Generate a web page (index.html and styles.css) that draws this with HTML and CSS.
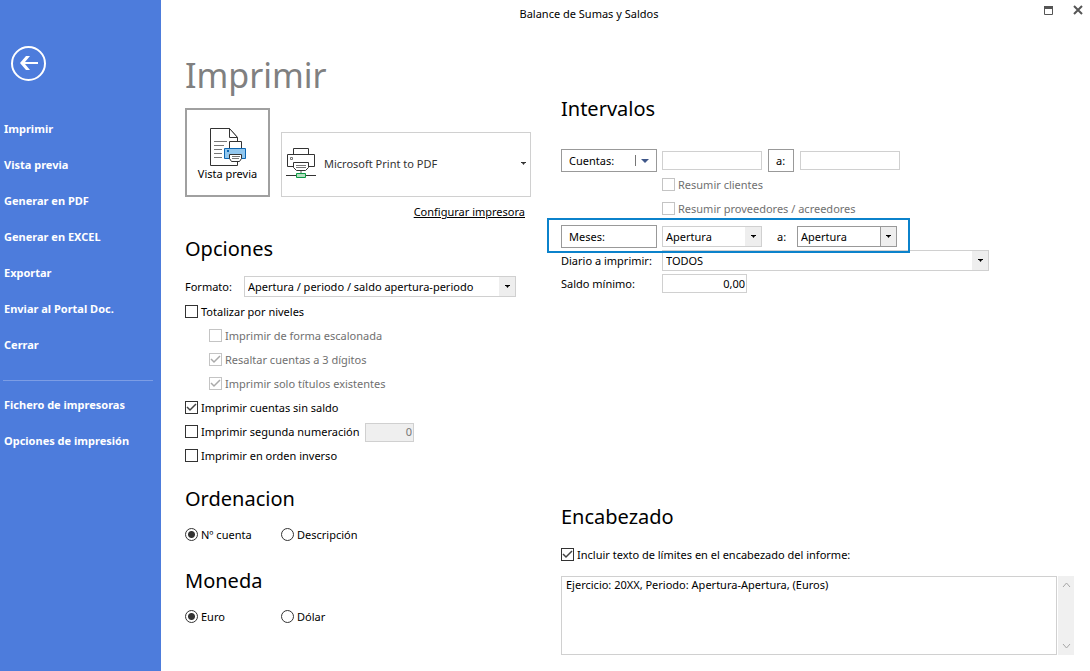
FILE: index.html
```html
<!DOCTYPE html>
<html lang="es">
<head>
<meta charset="utf-8">
<title>Balance de Sumas y Saldos</title>
<link rel="stylesheet" href="styles.css">
</head>
<body>
<aside class="sidebar">
  <button class="back" type="button" aria-label="Volver">
    <svg width="35" height="35" viewBox="0 0 35 35" fill="none" stroke="#fff"><circle cx="17.500" cy="17.500" r="16.500" stroke-width="2"/><path d="M27 17H11" stroke-width="2"/><path d="M9 17l6-7h4l-5 6v2l5 6h-4z" fill="#fff" stroke="none"/></svg>
  </button>
  <nav class="nav">
    <a href="#">Imprimir</a>
    <a href="#">Vista previa</a>
    <a href="#">Generar en PDF</a>
    <a href="#">Generar en EXCEL</a>
    <a href="#">Exportar</a>
    <a href="#">Enviar al Portal Doc.</a>
    <a href="#">Cerrar</a>
  </nav>
  <hr class="divider">
  <nav class="nav">
    <a href="#">Fichero de impresoras</a>
    <a href="#">Opciones de impresión</a>
  </nav>
</aside>

<div class="window">
  <header class="titlebar">
    <span class="caption">Balance de Sumas y Saldos</span>
    <div class="controls">
      <button type="button" aria-label="Maximizar"><svg width="9" height="9" viewBox="0 0 9 9"><path d="M.5 1.500h8v7h-8z" fill="none" stroke="#555"/><path d="M0 0h9v3H0z" fill="#555"/></svg></button>
      <button type="button" aria-label="Cerrar ventana"><svg width="10" height="10" viewBox="0 0 10 10"><path d="M1 1l8 8M9 1L1 9" stroke="#555" stroke-width="2"/></svg></button>
    </div>
  </header>

  <main class="content">
    <div class="left">
      <h1>Imprimir</h1>
      <div class="print">
        <button class="preview" type="button">
          <svg width="36" height="39" viewBox="1 0 36 39" fill="#fff" stroke="#333"><path d="M1.500.5h19l8 9v28h-27z"/><path d="M20.500.5v9h8z"/><path d="M5 13.500h13M5 17.500h10M5 21.500h8M5 25.500h8M5 29.500h8" stroke="#777"/><path d="M20.500 13.500h12v7h-12z"/><path d="M15.500 20.500h21v10h-21z" fill="#92c7ee" stroke="#0c66b2"/><path d="M18 22h2v2h-2z" fill="#0c66b2" stroke="none"/><path d="M20.500 26.500h12v4l-2 3h-8l-2-3z"/><path d="M23 28.500h8M23 30.500h7" stroke="#777"/></svg>
          <span>Vista previa</span>
        </button>
        <button class="printer" type="button">
          <svg width="30" height="31" viewBox="0 0 30 31" fill="#fff" stroke="#333"><path d="M7.500.5h15v6h-15z"/><path d="M1.500 6.500h27v12h-27z"/><path d="M4.500 9.500h2v2h-2z" stroke="#777"/><path d="M7.500 14.500h15v5l-3 3h-9l-3-3z"/><path d="M10 17.500h10M10 19.500h10" stroke="#777"/><path d="M15 23v3" stroke="#aaa" stroke-width="2"/><path d="M0 27.500h30"/><path d="M10.500 25.500h9v4h-9z" fill="#b5dfc0" stroke="#0c9a44"/></svg>
          <span class="printer-name">Microsoft Print to PDF</span>
          <svg width="5" height="3" viewBox="0 0 5 3"><path d="M0 0h5v1H4L2.500 3 1 1H0z" fill="#333"/></svg>
        </button>
      </div>
      <a class="configure" href="#">Configurar impresora</a>

      <section>
        <h2>Opciones</h2>
        <div class="format">
          <label for="formato">Formato:</label>
          <select id="formato" class="combo"><option>Apertura / periodo / saldo apertura-periodo</option></select>
        </div>
        <label class="check"><input type="checkbox">Totalizar por niveles</label>
        <label class="check nested"><input type="checkbox" disabled>Imprimir de forma escalonada</label>
        <label class="check nested"><input type="checkbox" checked disabled>Resaltar cuentas a 3 dígitos</label>
        <label class="check nested"><input type="checkbox" checked disabled>Imprimir solo títulos existentes</label>
        <label class="check"><input type="checkbox" checked>Imprimir cuentas sin saldo</label>
        <div class="numbering">
          <label class="check"><input type="checkbox">Imprimir segunda numeración</label>
          <input class="field number" type="text" value="0" aria-label="Segunda numeración" disabled>
        </div>
        <label class="check"><input type="checkbox">Imprimir en orden inverso</label>
      </section>

      <section class="choice">
        <h2>Ordenacion</h2>
        <div class="radios">
          <label class="check"><input type="radio" name="orden" checked>Nº cuenta</label>
          <label class="check"><input type="radio" name="orden">Descripción</label>
        </div>
      </section>

      <section class="choice">
        <h2>Moneda</h2>
        <div class="radios">
          <label class="check"><input type="radio" name="moneda" checked>Euro</label>
          <label class="check"><input type="radio" name="moneda">Dólar</label>
        </div>
      </section>
    </div>

    <div class="right">
      <section>
        <h2>Intervalos</h2>
        <div class="ranges">
          <button class="box split" type="button"><span>Cuentas:</span><svg width="15" height="11" viewBox="0 0 15 11"><path d="M.5 0v11" stroke="#777"/><path d="M6 4h8l-4 4z" fill="#3f5789"/></svg></button>
          <div class="pair">
            <input class="field" type="text" aria-label="Cuenta desde">
            <button class="box until" type="button">a:</button>
            <input class="field" type="text" aria-label="Cuenta hasta">
          </div>
          <div class="summary">
            <label class="check"><input type="checkbox" disabled>Resumir clientes</label>
            <label class="check"><input type="checkbox" disabled>Resumir proveedores / acreedores</label>
          </div>
          <div class="months">
            <button class="box" type="button">Meses:</button>
            <select class="combo" aria-label="Mes desde"><option>Apertura</option></select>
            <label class="month-to" for="mes-hasta">a:</label>
            <select id="mes-hasta" class="combo active"><option>Apertura</option></select>
          </div>
          <label for="diario">Diario a imprimir:</label>
          <select id="diario" class="combo journal"><option>TODOS</option></select>
          <label class="minimum-label" for="saldo">Saldo mínimo:</label>
          <input id="saldo" class="field number minimum" type="text" value="0,00">
        </div>
      </section>

      <section class="heading">
        <h2>Encabezado</h2>
        <label class="check"><input type="checkbox" checked>Incluir texto de límites en el encabezado del informe:</label>
        <div class="note">
          <textarea aria-label="Texto del encabezado">Ejercicio: 20XX, Periodo: Apertura-Apertura, (Euros)</textarea>
          <div class="scroll">
            <svg width="9" height="6" viewBox="0 0 9 6" fill="none" stroke="#a6a6a6"><path d="M1 5l3.500-4L8 5"/></svg>
            <svg width="9" height="6" viewBox="0 0 9 6" fill="none" stroke="#a6a6a6"><path d="M1 1l3.500 4L8 1"/></svg>
          </div>
        </div>
      </section>
    </div>
  </main>
</div>
</body>
</html>
```
FILE: styles.css
```css
* { box-sizing: border-box; }

body {
  margin: 0;
  min-height: 100vh;
  display: flex;
  background: #fff;
  color: #000;
  font: 11px/16px "Noto Sans", "Open Sans", sans-serif;
}

button, input, select, textarea { font: inherit; color: inherit; margin: 0; border-radius: 0; }
button { background: #fff; padding: 0; border: 0; }
svg { display: block; flex: none; }

.sidebar { width: 161px; flex: none; background: #4d7cdc; padding-top: 46px; }
.back { display: block; background: none; margin: 0 0 30px 11px; }
.nav { display: flex; flex-direction: column; }
.nav a { height: 36px; padding-left: 4px; line-height: 36px; color: #fff; font-weight: 700; text-decoration: none; }
.divider { border: 0; height: 1px; background: #7c9de5; margin: 17px 8px 6px 3px; }

.window { flex: 1; min-width: 0; display: flex; flex-direction: column; }
.titlebar { display: flex; height: 28px; align-items: center; }
.caption { flex: 1; text-align: center; }
.controls { width: 73px; display: flex; justify-content: flex-end; gap: 20px; padding: 0 7px 8px 0; align-items: center; }

.content { flex: 1; display: grid; grid-template-columns: 376px 1fr; padding: 25px 16px 16px 24px; }
h1 { margin: 0 0 11px; font-size: 34px; line-height: 44px; font-weight: 400; color: #808080; }
h2 { margin: 0; font-size: 20px; line-height: 28px; font-weight: 400; }

.left { padding-right: 30px; }
.print { display: flex; align-items: flex-end; gap: 11px; }
.preview { width: 85px; height: 89px; padding-top: 3px; border: 2px solid #a0a0a0; display: flex; flex-direction: column; align-items: center; justify-content: center; line-height: 14px; }
.printer { flex: 1; height: 65px; border: 1px solid #d0d0d0; display: flex; align-items: center; gap: 8px; padding: 0 4px 2px; color: #333; }
.printer-name { flex: 1; text-align: left; }
.configure { display: block; width: max-content; margin: 7px 6px 15px auto; color: #000; }

.combo {
  appearance: none;
  width: 100px;
  height: 21px;
  border: 1px solid #d0d0d0;
  padding: 0 18px 0 3px;
  background:
    url("data:image/svg+xml,%3Csvg xmlns='http://www.w3.org/2000/svg' width='5' height='3'%3E%3Cpath d='M0 0h5v1H4L2.500 3 1 1H0z'/%3E%3C/svg%3E") no-repeat right 5px center,
    linear-gradient(#eee, #eee) no-repeat right / 16px 100%,
    #fff;
}
.combo.active { border-color: #999; background-image:
    url("data:image/svg+xml,%3Csvg xmlns='http://www.w3.org/2000/svg' width='5' height='3'%3E%3Cpath d='M0 0h5v1H4L2.500 3 1 1H0z'/%3E%3C/svg%3E"),
    linear-gradient(90deg, #999 1px, #eee 1px); }
.field { width: 100px; height: 19px; padding: 0 3px; border: 1px solid #d0d0d0; background: #fff; }
.number { text-align: right; padding: 0 1px 1px; }
.field:disabled { background: #efefef; color: #777; }
.box { height: 23px; border: 1px solid #999; padding: 0 7px; text-align: left; }

.format { display: flex; align-items: center; height: 21px; margin: 13px 15px 3px 0; }
.format label { width: 59px; }
.format .combo { flex: 1; }

.check { display: flex; align-items: center; gap: 3px; height: 24px; }
.check:has(:disabled) { color: #707070; }
.check input { appearance: none; width: 13px; height: 13px; margin-bottom: 1px; border: 1px solid #333; background: #fff no-repeat center; }
.check input[type="radio"] { border-radius: 50%; }
.check input[type="checkbox"]:checked { background-image: url("data:image/svg+xml,%3Csvg xmlns='http://www.w3.org/2000/svg' width='11' height='11' fill='none' stroke='%23444' stroke-width='1.500'%3E%3Cpath d='M1 5l3 3 6-6'/%3E%3C/svg%3E"); }
.check input[type="radio"]:checked { background-image: radial-gradient(circle, #333 3px, transparent 4px); }
.check input:disabled { border-color: #c4c4c4; }
.check input[type="checkbox"]:disabled:checked { background-image: url("data:image/svg+xml,%3Csvg xmlns='http://www.w3.org/2000/svg' width='11' height='11' fill='none' stroke='%23aaa' stroke-width='1.500'%3E%3Cpath d='M1 5l3 3 6-6'/%3E%3C/svg%3E"); }
.nested { padding-left: 24px; }
.numbering { display: flex; align-items: center; }
.numbering .check { width: 180px; }
.numbering .field { width: 49px; }

.choice { margin-top: 17px; }
.choice + .choice { margin-top: 20px; }
.radios { display: grid; grid-template-columns: 96px 1fr; margin-top: 10px; }

.right { display: flex; flex-direction: column; padding-top: 42px; }
.ranges { display: grid; grid-template-columns: 96px 1fr; column-gap: 5px; align-items: center; margin-top: 26px; }
.split { display: flex; align-items: center; justify-content: space-between; padding-right: 6px; }
.pair { display: flex; align-items: center; gap: 6px; }
.until { width: 26px; }
.summary { grid-column: 2; padding: 1px 0 4px; }
.months { grid-column: 1 / -1; display: flex; align-items: center; position: relative; width: max-content; margin-bottom: 2px; }
.months::after { content: ""; position: absolute; inset: -7px -13px -5px -14px; border: 2px solid #0b82cb; pointer-events: none; }
.months .box { width: 96px; margin-right: 5px; }
.month-to { width: 35px; padding-left: 15px; }
.journal { width: 327px; }
.minimum { width: 85px; margin-top: 3px; }
.minimum-label { padding-top: 3px; }

.heading { margin-top: auto; }
.heading .check { margin: 12px 0 9px; }
.note { display: flex; height: 79px; gap: 1px; }
.note textarea { flex: 1; min-width: 0; border: 1px solid #d0d0d0; padding: 0 4px; resize: none; overflow: hidden; }
.scroll { width: 16px; background: #f0f0f0; display: flex; flex-direction: column; align-items: center; justify-content: space-between; padding: 6px 0; }
```
